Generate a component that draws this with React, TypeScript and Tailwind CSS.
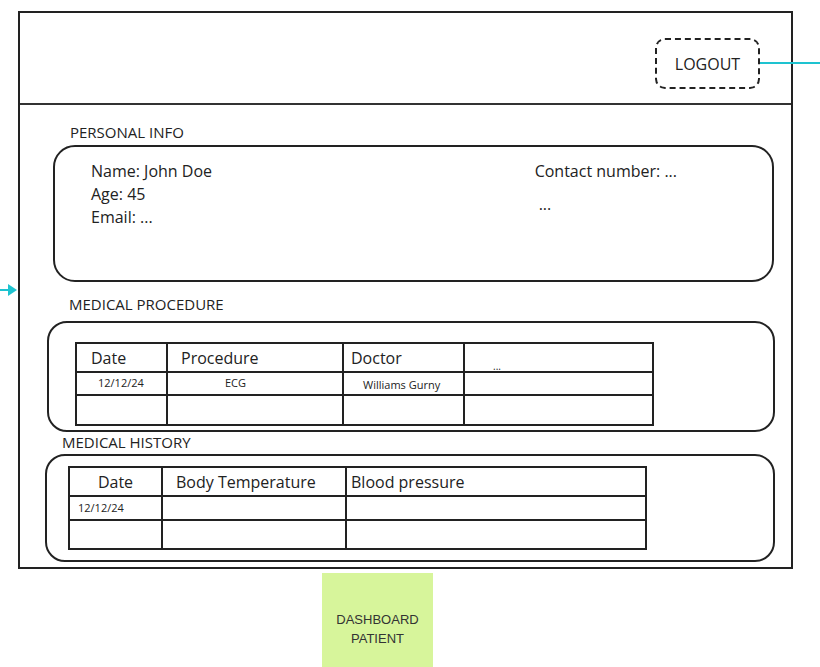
import React from "react";

const font = { fontFamily: '"Open Sans", "Liberation Sans", sans-serif' };

const SectionLabel = ({ children, className = "" }: { children: React.ReactNode; className?: string }) => (
  <div className={`text-[15px] leading-[18px] text-[#222] uppercase ${className}`}>{children}</div>
);

const App = () => {
  return (
    <div className="relative w-[820px] h-[667px] bg-white overflow-hidden text-[#222]" style={font}>
      {/* connector lines */}
      <div className="absolute left-[760px] top-[62px] w-[60px] h-[2px] bg-[#1ec3d0]" />
      <svg className="absolute left-0 top-[282px]" width="18" height="16" viewBox="0 0 18 16">
        <path d="M0 8 H10" stroke="#1ec3d0" strokeWidth="2" />
        <polygon points="8,2 17,8 8,14" fill="#1ec3d0" />
      </svg>

      {/* Frame */}
      <div className="ml-[18px] mt-[11px] w-[775px] h-[558px] border-2 border-[#222] flex flex-col">
        {/* Header */}
        <div className="h-[92px] border-b-2 border-[#333] flex items-start justify-end pr-[31px] pt-[25px]">
          <button className="w-[105px] h-[51px] border-2 border-dashed border-[#222] rounded-[10px] text-[16px] text-[#222]">
            LOGOUT
          </button>
        </div>

        {/* Personal info */}
        <SectionLabel className="ml-[50px] mt-[18px]">Personal Info</SectionLabel>
        <div className="ml-[33px] mt-[4px] w-[721px] h-[137px] border-2 border-[#222] rounded-[22px] flex justify-between pl-[36px] pr-[95px] pt-[13px]">
          <div className="flex flex-col text-[16px] leading-[23px]">
            <span>Name: John Doe</span>
            <span>Age: 45</span>
            <span>Email: ...</span>
          </div>
          <div className="flex flex-col text-[16px] leading-[23px]">
            <span>Contact number: ...</span>
            <span className="ml-[4px] mt-[10px]">...</span>
          </div>
        </div>

        {/* Medical procedure */}
        <SectionLabel className="ml-[49px] mt-[13px]">Medical Procedure</SectionLabel>
        <div className="ml-[27px] mt-[8px] w-[728px] h-[111px] border-2 border-[#222] rounded-[20px] pl-[26px] pt-[19px]">
          <table className="w-[579px] border-collapse border-2 border-[#222]">
            <colgroup>
              <col className="w-[91px]" />
              <col className="w-[176px]" />
              <col className="w-[121px]" />
              <col />
            </colgroup>
            <tbody>
              <tr className="h-[29px] text-[16px]">
                <td className="border-2 border-[#222] pl-[14px]">Date</td>
                <td className="border-2 border-[#222] pl-[13px]">Procedure</td>
                <td className="border-2 border-[#222] pl-[7px]">Doctor</td>
                <td className="border-2 border-[#222] pl-[28px] align-bottom text-[10px] leading-[10px]">...</td>
              </tr>
              <tr className="h-[23px] text-[11px]">
                <td className="border-2 border-[#222] pl-[21px]">12/12/24</td>
                <td className="border-2 border-[#222] pl-[57px]">ECG</td>
                <td className="border-2 border-[#222] pl-[19px] pt-[4px]">Williams Gurny</td>
                <td className="border-2 border-[#222]" />
              </tr>
              <tr className="h-[30px]">
                <td className="border-2 border-[#222]" />
                <td className="border-2 border-[#222]" />
                <td className="border-2 border-[#222]" />
                <td className="border-2 border-[#222]" />
              </tr>
            </tbody>
          </table>
        </div>

        {/* Medical history */}
        <SectionLabel className="ml-[42px] mt-[1px]">Medical History</SectionLabel>
        <div className="ml-[25px] mt-[3px] w-[730px] h-[108px] border-2 border-[#222] rounded-[20px] pl-[21px] pt-[10px]">
          <table className="w-[579px] border-collapse border-2 border-[#222]">
            <colgroup>
              <col className="w-[93px]" />
              <col className="w-[184px]" />
              <col />
            </colgroup>
            <tbody>
              <tr className="h-[29px] text-[16px]">
                <td className="border-2 border-[#222] text-center">Date</td>
                <td className="border-2 border-[#222] pl-[13px]">Body Temperature</td>
                <td className="border-2 border-[#222] pl-[4px]">Blood pressure</td>
              </tr>
              <tr className="h-[24px] text-[11px]">
                <td className="border-2 border-[#222] pl-[8px]">12/12/24</td>
                <td className="border-2 border-[#222]" />
                <td className="border-2 border-[#222]" />
              </tr>
              <tr className="h-[29px]">
                <td className="border-2 border-[#222]" />
                <td className="border-2 border-[#222]" />
                <td className="border-2 border-[#222]" />
              </tr>
            </tbody>
          </table>
        </div>
      </div>

      {/* Sticky note */}
      <div
        className="ml-[322px] mt-[4px] w-[111px] h-[94px] bg-[#d7f59b] flex flex-col items-center justify-center pt-[18px] text-[13px] leading-[19px] text-[#333]"
        style={{ fontFamily: '"Liberation Sans", Arial, sans-serif' }}
      >
        <span>DASHBOARD</span>
        <span>PATIENT</span>
      </div>
    </div>
  );
};

export default App;
